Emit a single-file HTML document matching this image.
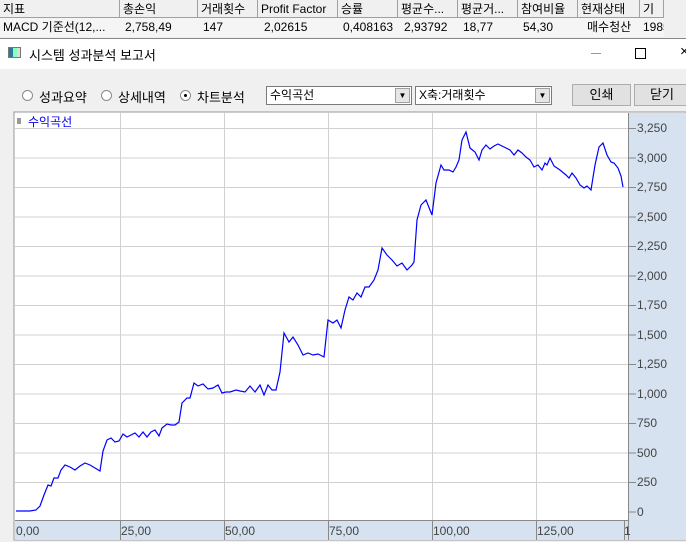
<!DOCTYPE html>
<html><head><meta charset="utf-8"><style>
*{margin:0;padding:0;box-sizing:border-box}
body{width:686px;height:542px;overflow:hidden;background:#f0f0f0;font-family:"Liberation Sans","Noto Sans CJK KR",sans-serif;font-size:12px;color:#000;position:relative}
.a{position:absolute;white-space:nowrap}
.th{position:absolute;top:0;height:18px;background:#f0f0f0;border-right:1px solid #a0a0a0;border-bottom:1px solid #a0a0a0;padding:1px 3px;line-height:16px}
.td{position:absolute;top:18px;height:18px;line-height:18px;padding-left:3px}
.radio{position:absolute;width:11px;height:11px;border:1px solid #8a8a8a;border-radius:50%;background:#fff}
.sel{position:absolute;height:19px;background:#fff;border:1px solid #7a7a7a;padding-left:3px;line-height:17px}
.sel i{position:absolute;right:1px;top:1px;width:15px;height:15px;background:#e6e6e6;border:1px solid #a0a0a0;font-style:normal;font-size:8px;text-align:center;line-height:14px}
.btn{position:absolute;top:84px;height:22px;background:#e1e1e1;border:1px solid #adadad;text-align:center;line-height:20px;font-size:13px}
</style></head><body>
<div style="position:absolute;left:0;top:0;width:664px;height:37px;background:#f5f5f5"></div>
<div class="th" style="left:0;width:120px">지표</div>
<div class="th" style="left:120px;width:78px">총손익</div>
<div class="th" style="left:198px;width:60px">거래횟수</div>
<div class="th" style="left:258px;width:80px">Profit Factor</div>
<div class="th" style="left:338px;width:60px">승률</div>
<div class="th" style="left:398px;width:60px">평균수...</div>
<div class="th" style="left:458px;width:60px">평균거...</div>
<div class="th" style="left:518px;width:60px">참여비율</div>
<div class="th" style="left:578px;width:62px">현재상태</div>
<div class="th" style="left:640px;width:24px;overflow:hidden">기간</div>
<div class="td" style="left:0">MACD 기준선(12,...</div>
<div class="td" style="left:122px">2,758,49</div>
<div class="td" style="left:200px">147</div>
<div class="td" style="left:261px">2,02615</div>
<div class="td" style="left:340px">0,408163</div>
<div class="td" style="left:401px">2,93792</div>
<div class="td" style="left:460px">18,77</div>
<div class="td" style="left:520px">54,30</div>
<div class="td" style="left:584px">매수청산</div>
<div class="td" style="left:640px;width:24px;overflow:hidden">1985</div>
<div style="position:absolute;left:0;top:38px;width:686px;height:31px;background:#fff;border-top:1px solid #888"></div>
<div class="a" style="left:8px;top:47px;width:13px;height:11px;border:1px solid #777;background:linear-gradient(90deg,#2a7a9a 0 4px,#8fb 4px 8px,#ddd 8px)"></div>
<div class="a" style="left:29px;top:45px;font-size:13px">시스템 성과분석 보고서</div>
<div class="a" style="left:591px;top:53px;width:10px;height:1px;background:#999"></div>
<div class="a" style="left:635px;top:48px;width:11px;height:11px;border:1px solid #000"></div>
<div class="a" style="left:680px;top:43px;font-size:15px">×</div>
<div class="radio" style="left:22px;top:90px"></div><div class="a" style="left:39px;top:87px;font-size:13px">성과요약</div>
<div class="radio" style="left:101px;top:90px"></div><div class="a" style="left:118px;top:87px;font-size:13px">상세내역</div>
<div class="radio" style="left:180px;top:90px"><div style="position:absolute;left:3px;top:3px;width:3px;height:3px;background:#000;border-radius:50%"></div></div><div class="a" style="left:197px;top:87px;font-size:13px">차트분석</div>
<div class="sel" style="left:266px;top:86px;width:146px">수익곡선<i>▼</i></div>
<div class="sel" style="left:415px;top:86px;width:137px">X축:거래횟수<i>▼</i></div>
<div class="btn" style="left:572px;width:59px">인쇄</div>
<div class="btn" style="left:634px;width:56px">닫기</div>
<svg class="a" style="left:0;top:0" width="686" height="542">
<rect x="14" y="112" width="672" height="428" fill="#fff" stroke="#999"/>
<rect x="628" y="113" width="58" height="427" fill="#d6e2f0"/>
<rect x="15" y="520" width="613" height="20" fill="#d6e2f0"/>
<g stroke="#d0d0d0" stroke-width="1">
<line x1="120.5" y1="113" x2="120.5" y2="520"/><line x1="224.5" y1="113" x2="224.5" y2="520"/><line x1="328.5" y1="113" x2="328.5" y2="520"/><line x1="432.5" y1="113" x2="432.5" y2="520"/><line x1="536.5" y1="113" x2="536.5" y2="520"/>
<line x1="15" y1="128.5" x2="628" y2="128.5"/><line x1="15" y1="158" x2="628" y2="158"/><line x1="15" y1="187.5" x2="628" y2="187.5"/><line x1="15" y1="217" x2="628" y2="217"/><line x1="15" y1="246.5" x2="628" y2="246.5"/><line x1="15" y1="276" x2="628" y2="276"/><line x1="15" y1="305.5" x2="628" y2="305.5"/><line x1="15" y1="335" x2="628" y2="335"/><line x1="15" y1="364.5" x2="628" y2="364.5"/><line x1="15" y1="394" x2="628" y2="394"/><line x1="15" y1="423.5" x2="628" y2="423.5"/><line x1="15" y1="453" x2="628" y2="453"/><line x1="15" y1="482.5" x2="628" y2="482.5"/>
</g>
<g stroke="#888"><line x1="628.5" y1="113" x2="628.5" y2="540"/><line x1="15" y1="520.5" x2="628" y2="520.5"/>
<line x1="120.5" y1="520" x2="120.5" y2="540"/><line x1="224.5" y1="520" x2="224.5" y2="540"/><line x1="328.5" y1="520" x2="328.5" y2="540"/><line x1="432.5" y1="520" x2="432.5" y2="540"/><line x1="536.5" y1="520" x2="536.5" y2="540"/><line x1="624.5" y1="520" x2="624.5" y2="540"/>
</g>
<g stroke="#888" stroke-width="1">
<line x1="629" y1="128.5" x2="636" y2="128.5"/><line x1="629" y1="158" x2="636" y2="158"/><line x1="629" y1="187.5" x2="636" y2="187.5"/><line x1="629" y1="217" x2="636" y2="217"/><line x1="629" y1="246.5" x2="636" y2="246.5"/><line x1="629" y1="276" x2="636" y2="276"/><line x1="629" y1="305.5" x2="636" y2="305.5"/><line x1="629" y1="335" x2="636" y2="335"/><line x1="629" y1="364.5" x2="636" y2="364.5"/><line x1="629" y1="394" x2="636" y2="394"/><line x1="629" y1="423.5" x2="636" y2="423.5"/><line x1="629" y1="453" x2="636" y2="453"/><line x1="629" y1="482.5" x2="636" y2="482.5"/><line x1="629" y1="512" x2="636" y2="512"/>
</g>
<g font-size="12" fill="#444" font-family="Liberation Sans,sans-serif">
<text x="637" y="132">3,250</text><text x="637" y="162">3,000</text><text x="637" y="191">2,750</text><text x="637" y="221">2,500</text><text x="637" y="250">2,250</text><text x="637" y="280">2,000</text><text x="637" y="309">1,750</text><text x="637" y="339">1,500</text><text x="637" y="368">1,250</text><text x="637" y="398">1,000</text><text x="637" y="427">750</text><text x="637" y="457">500</text><text x="637" y="486">250</text><text x="637" y="516">0</text>
<text x="16" y="535">0,00</text><text x="121" y="535">25,00</text><text x="225" y="535">50,00</text><text x="329" y="535">75,00</text><text x="433" y="535">100,00</text><text x="537" y="535">125,00</text><text x="624" y="535">1</text>
</g>
<rect x="17" y="118" width="4" height="6" fill="#999"/>
<text x="28" y="126" font-size="12" fill="#0000ee" font-family="Liberation Sans,Noto Sans CJK KR,sans-serif">수익곡선</text>
<polyline fill="none" stroke="#0000ff" stroke-width="1.2" points="16,511 30,511 36,510 40,506 44,495 48,485 51,486 54,478 58,478 61,470 65,465 70,467 75,470 80,466 85,463 90,465 95,468 100,471 103,451 107,440 111,438 115,442 119,441 123,434 127,437 131,435 135,433 139,437 143,432 147,437 151,432 155,430 159,436 162,428 167,424 171,425 175,425 179,422 182,403 187,398 190,398 194,383 198,386 203,384 208,389 213,388 218,385 222,393 226,392 230,392 236,390 240,391 245,392 250,386 255,392 260,385 264,395 268,385 272,390 276,390 280,372 284,333 289,342 293,337 298,345 303,355 308,353 313,355 318,354 324,357 328,320 333,323 337,320 341,328 345,310 349,297 353,300 357,293 361,297 365,287 369,287 374,280 378,270 382,248 387,255 392,260 397,266 402,263 407,270 412,265 414,262 417,220 421,205 426,200 432,215 436,183 441,165 444,170 449,170 453,172 456,167 459,160 462,140 466,132 470,148 475,152 479,160 482,150 486,145 490,149 494,146 498,144 504,147 510,150 514,155 518,150 522,153 526,157 530,160 534,167 538,165 542,170 545,163 547,165 550,158 554,166 560,170 566,175 569,178 572,173 576,178 580,185 584,188 587,186 591,190 595,165 599,147 603,143 607,155 611,162 614,163 618,168 621,176 623,187"/>
</svg>
</body></html>
